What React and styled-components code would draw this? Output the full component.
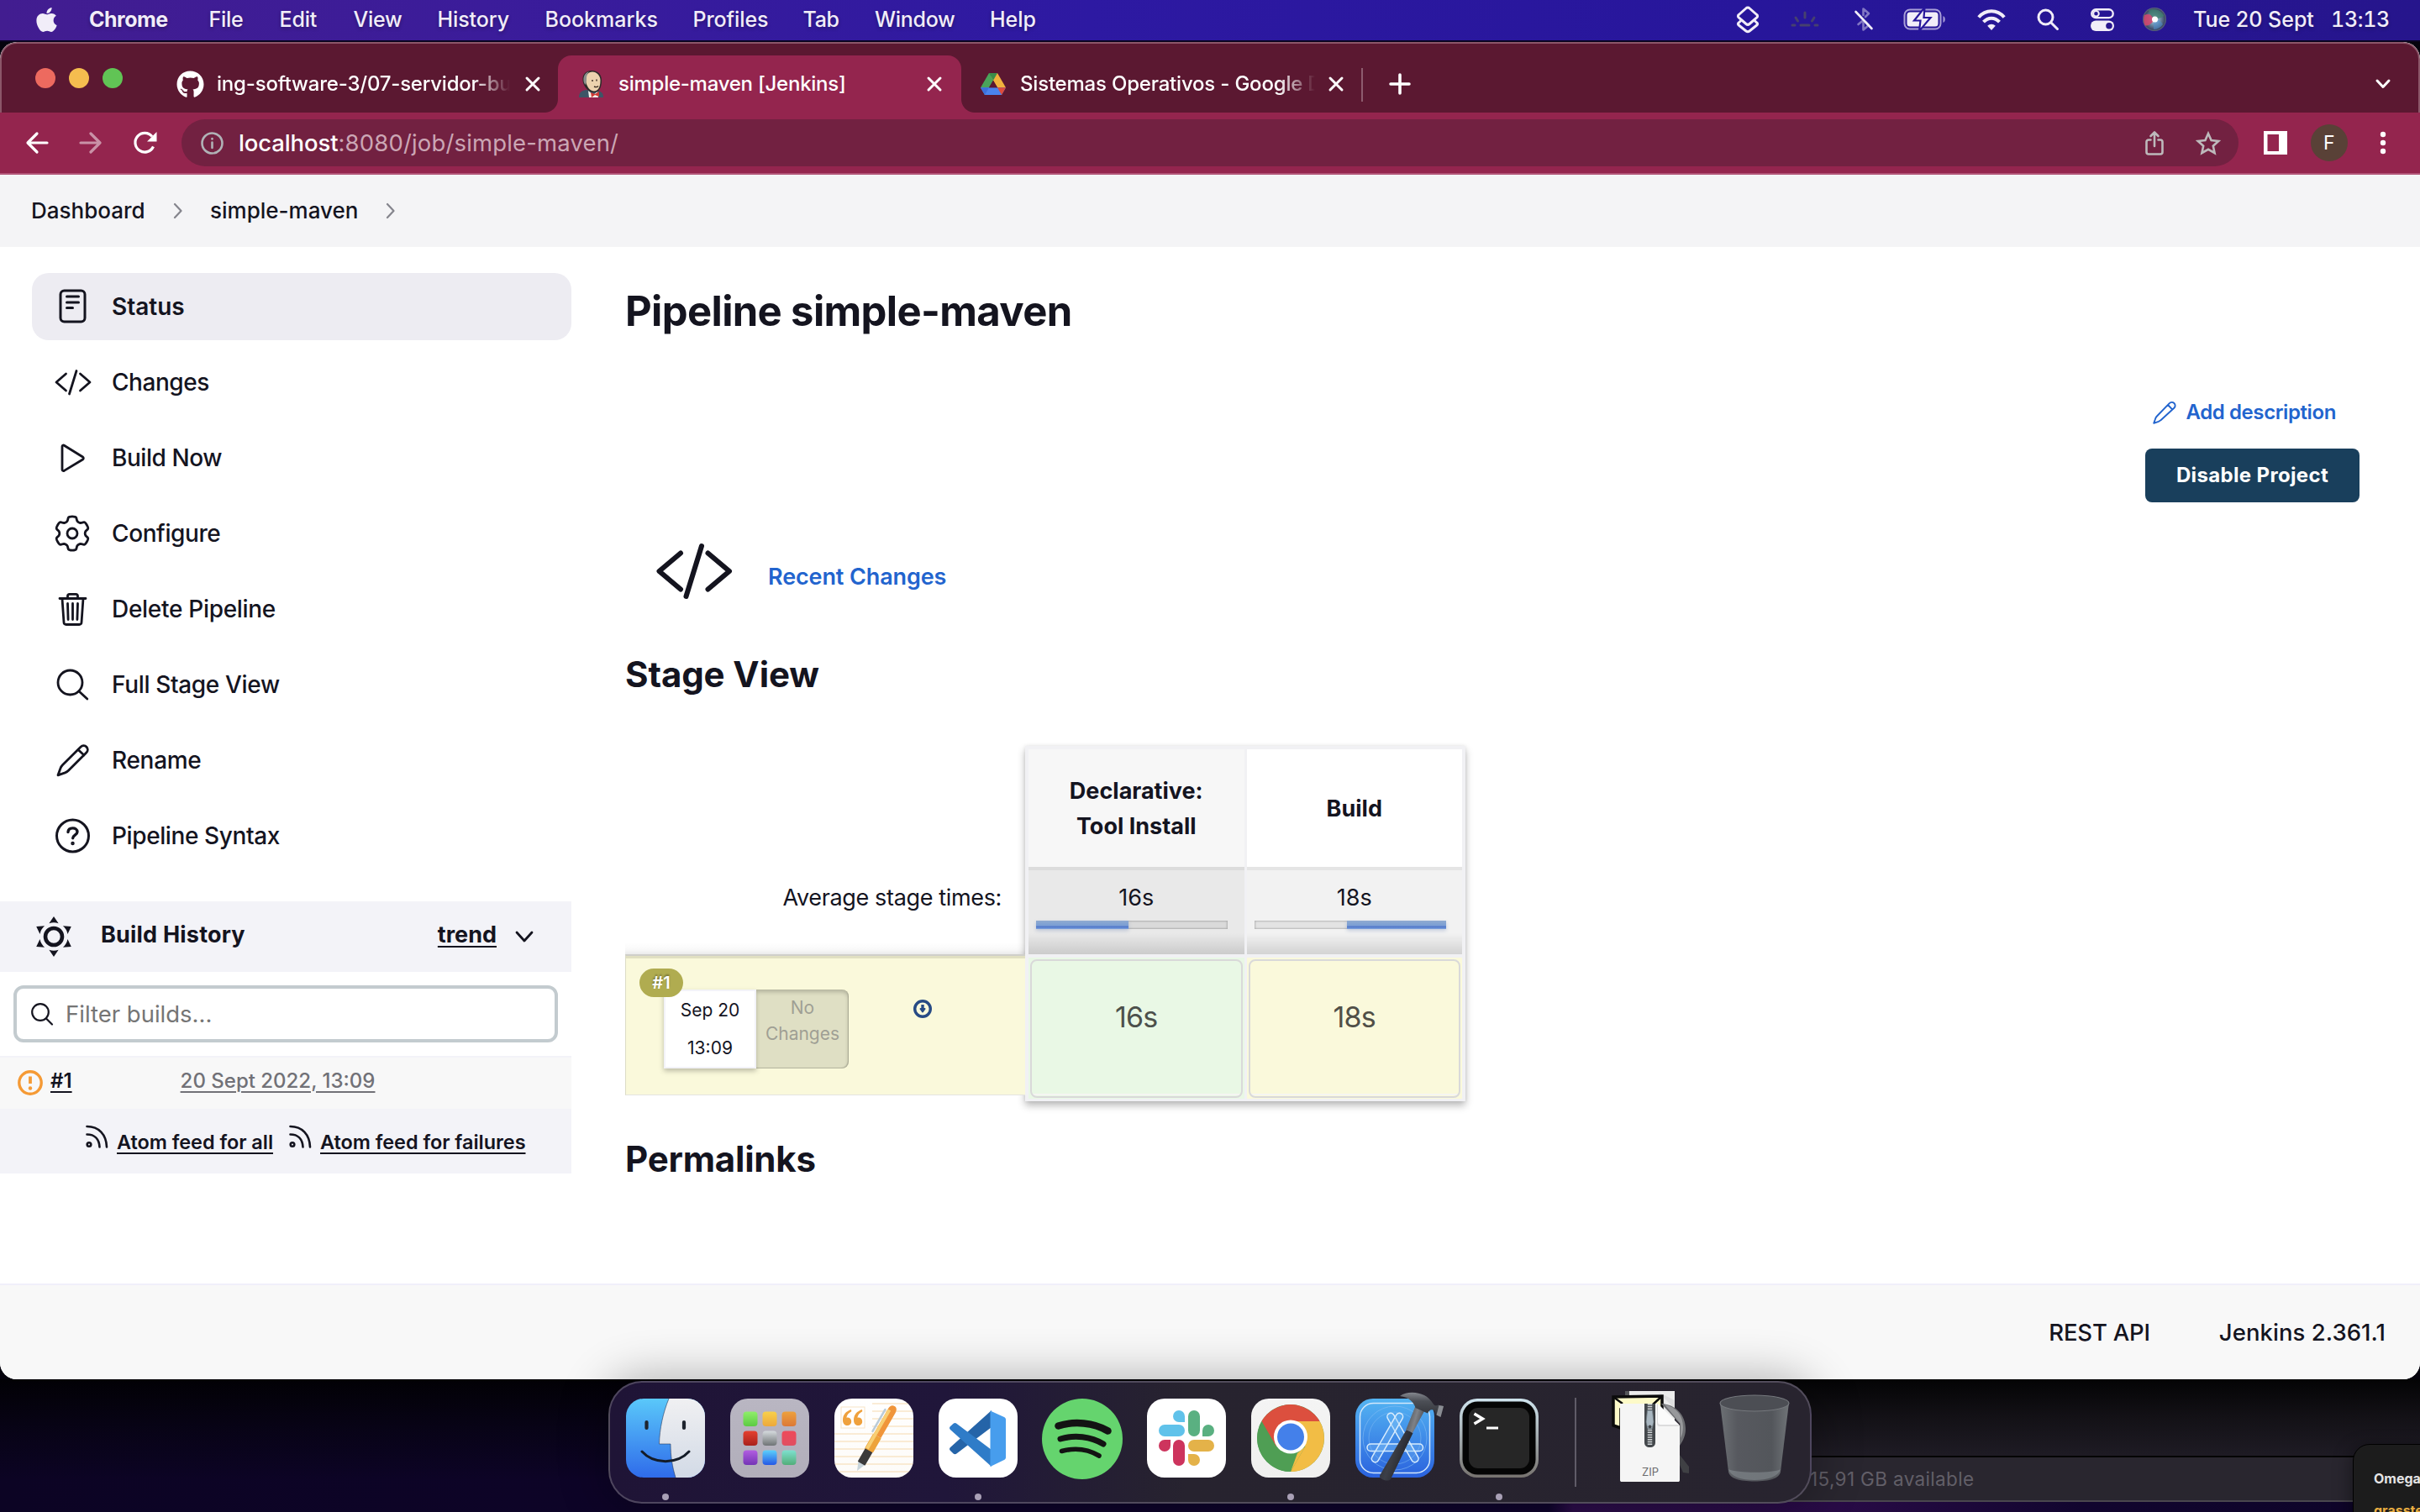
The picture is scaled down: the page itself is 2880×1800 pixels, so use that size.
import React from "react";
import styled, { createGlobalStyle } from "styled-components";
import { FaApple, FaGithub } from "react-icons/fa";

const ink = "#14141f";
const lilac = "#f3f3f8";
const wine = "#94254e";
const wineDark = "#5b1831";
const link = "#2264ce";

const Global = createGlobalStyle`
  *, *::before, *::after { box-sizing: border-box; }
  html, body { margin: 0; padding: 0; background: #05030d; }
  body { font-family: Inter, "Liberation Sans", sans-serif; color: ${ink}; overflow: hidden; }
  svg { display: block; flex: none; overflow: visible; }
`;

const Label = styled.span`
  flex: none;
  white-space: nowrap;
  font-size: ${(p) => p.$size}px;
  font-weight: ${(p) => p.$weight || 400};
  letter-spacing: ${(p) => p.$track || 0}px;
  color: ${(p) => p.$color || "inherit"};
  line-height: ${(p) => p.$line || 1.2};
  ${(p) => p.$tabular && "font-variant-numeric: tabular-nums;"}
`;

const Desktop = styled.div`
  width: 2880px;
  height: 1800px;
  display: flex;
  flex-direction: column;
  overflow: hidden;
  background: #05030d;
`;

/* ---------- menu bar ---------- */

const MenuBar = styled.header`
  flex: none;
  height: 50px;
  padding: 0 37px 2px 39px;
  display: flex;
  align-items: center;
  color: #f1edf8;
  background: linear-gradient(90deg, #421d90 0%, #3b1c9a 20%, #2d19a2 45%, #27169b 72%, #26158c 100%);
  border-bottom: 2px solid #0a0420;
  text-shadow: 0 2px 4px rgba(0, 0, 0, 0.3);
`;

const MenuItem = styled.div`
  flex: none;
  width: ${(p) => p.$width}px;
`;

const StatusIcons = styled.div`
  margin-left: auto;
  display: flex;
  align-items: center;
`;

const StatusSlot = styled.div`
  flex: none;
  margin-right: ${(p) => p.$gap}px;
`;

/* ---------- browser window ---------- */

const Window = styled.main`
  flex: none;
  height: 1592px;
  display: flex;
  flex-direction: column;
  border-radius: 20px;
  overflow: hidden;
  background: #ffffff;
`;

const TabStrip = styled.div`
  flex: none;
  height: 84px;
  display: flex;
  align-items: flex-end;
  background: ${wineDark};
  border: 2px solid #8b5669;
  border-bottom: 0;
  border-radius: 20px 20px 0 0;
  color: #fff;
`;

const Lights = styled.div`
  flex: none;
  width: 188px;
  height: 82px;
  padding: 29px 0 0 40px;
  display: flex;
  gap: 16px;
`;

const Light = styled.span`
  width: 24px;
  height: 24px;
  border-radius: 50%;
  background: ${(p) => p.$color};
`;

const Tab = styled.div`
  position: relative;
  flex: none;
  width: ${(p) => p.$width}px;
  height: 68px;
  padding-left: ${(p) => p.$left}px;
  padding-right: ${(p) => p.$right}px;
  display: flex;
  align-items: center;
  background: ${(p) => (p.$active ? wine : "transparent")};
  border-radius: 16px 16px 0 0;
  ${(p) =>
    p.$active &&
    `
    &::before, &::after {
      content: "";
      position: absolute;
      bottom: 0;
      width: 16px;
      height: 16px;
    }
    &::before { left: -16px; background: radial-gradient(circle at 0 0, transparent 15.5px, ${wine} 16.5px); }
    &::after { right: -16px; background: radial-gradient(circle at 100% 0, transparent 15.5px, ${wine} 16.5px); }
  `}
`;

const TabTitle = styled.div`
  flex: 1;
  min-width: 0;
  margin: 0 ${(p) => p.$gap || 14}px 0 ${(p) => p.$start}px;
  ${(p) => p.$fade && "mask-image: linear-gradient(90deg, #000 calc(100% - 48px), transparent calc(100% - 4px));"}
`;

const TabDivider = styled.i`
  flex: none;
  width: 2px;
  height: 40px;
  margin: 0 31px 13px 0;
  background: #8d5c6e;
`;

const StripEnd = styled.div`
  height: 68px;
  display: flex;
  align-items: center;
  ${(p) => p.$push && "margin-left: auto; padding-right: 33px;"}
`;

const Toolbar = styled.div`
  flex: none;
  height: 74px;
  padding: 0 40px 0 12px;
  display: flex;
  align-items: center;
  background: ${wine};
  border-bottom: 2px solid #b25578;
  color: #fff;
`;

const NavButton = styled.div`
  width: 64.3px;
  display: flex;
  justify-content: center;
  opacity: ${(p) => (p.$dim ? 0.5 : 1)};
`;

const Address = styled.div`
  flex: none;
  width: 2448px;
  height: 56px;
  margin-left: 11px;
  padding: 0 21px 0 23px;
  display: flex;
  align-items: center;
  border-radius: 28px;
  background: #722141;
`;

const AddressText = styled.div`
  flex: 1;
  margin-left: 18px;
`;

const AddressIcons = styled.div`
  display: flex;
  align-items: center;
  gap: 38px;
`;

const ToolbarEnd = styled.div`
  margin-left: 30px;
  display: flex;
  align-items: center;
`;

const Avatar = styled.div`
  width: 44px;
  height: 44px;
  margin: 0 38px 0 28px;
  padding-top: 2px;
  border-radius: 50%;
  background: #594137;
  display: flex;
  align-items: center;
  justify-content: center;
`;

/* ---------- Jenkins page ---------- */

const Breadcrumbs = styled.nav`
  flex: none;
  height: 86px;
  padding-left: 37px;
  display: flex;
  align-items: center;
  background: #f4f4f6;
`;

const Crumb = styled.div`
  width: ${(p) => p.$width}px;
`;

const Page = styled.div`
  flex: none;
  height: 1234px;
  display: flex;
`;

const Sidebar = styled.aside`
  flex: none;
  width: 680px;
  padding-top: 31px;
`;

const Tasks = styled.div`
  display: flex;
  flex-direction: column;
  gap: 10px;
  padding-left: 38px;
`;

const Task = styled.div`
  height: 80px;
  padding-left: 23px;
  display: flex;
  align-items: center;
  gap: 24px;
  border-radius: 20px;
  background: ${(p) => (p.$active ? "#edecf2" : "transparent")};
`;

const TaskName = styled.div`
  padding-top: 2px;
`;

const HistoryHead = styled.div`
  height: 84px;
  margin-top: 38px;
  padding: 0 45px 0 40px;
  display: flex;
  align-items: center;
  background: ${lilac};
`;

const Grow = styled.span`
  flex: 1;
`;

const Raised = styled.span`
  display: flex;
  margin-bottom: ${(p) => p.$by}px;
  margin-left: ${(p) => p.$left || 0}px;
`;

const Underlined = styled(Label)`
  text-decoration: underline;
  text-decoration-thickness: 2px;
  text-underline-offset: 4px;
`;

const Filter = styled.div`
  height: 68px;
  margin: 16px;
  padding-left: 17px;
  display: flex;
  align-items: center;
  gap: 15px;
  border: 4px solid #c3cbcf;
  border-radius: 12px;
`;

const BuildRow = styled.div`
  height: 63px;
  padding-left: 21px;
  display: flex;
  align-items: center;
  background: #f8f8f8;
  border-top: 2px solid ${lilac};
`;

const Feeds = styled.div`
  height: 77px;
  padding-left: 102px;
  display: flex;
  align-items: center;
  background: ${lilac};
`;

const FeedLink = styled.div`
  margin-left: 10px;
  padding-top: 3px;
`;

const Content = styled.section`
  flex: 1;
  padding: 46px 72px 0 64px;
  display: flex;
  flex-direction: column;
`;

const Heading = styled.h1`
  margin: ${(p) => p.$top || 0}px 0 0;
  font-size: ${(p) => p.$size}px;
  line-height: ${(p) => p.$line}px;
  letter-spacing: ${(p) => p.$track}px;
  font-weight: 700;
`;

const Actions = styled.div`
  margin-top: 70px;
  display: flex;
  flex-direction: column;
  align-items: flex-end;
  gap: 23px;
`;

const AddLink = styled.div`
  height: 40px;
  padding-right: 28px;
  display: flex;
  align-items: center;
  gap: 11px;
  color: ${link};
`;

const Button = styled.div`
  width: 255px;
  height: 64px;
  padding-top: 1px;
  border-radius: 8px;
  display: flex;
  align-items: center;
  justify-content: center;
  background: #193f5c;
  color: #fff;
`;

const Recent = styled.div`
  height: 66px;
  margin-top: 49px;
  padding-left: 37px;
  display: flex;
  align-items: center;
  gap: 43px;
  color: ${link};
`;

const RecentText = styled.div`
  padding-top: 15px;
`;

const StageTable = styled.div`
  margin-top: 60px;
  height: 423px;
  display: flex;
`;

const RunColumn = styled.div`
  width: 476px;
  padding-top: 148px;
`;

const AverageLabel = styled.div`
  height: 100px;
  padding: 17px 28px 0 0;
  text-align: right;
  background: linear-gradient(180deg, rgba(0,0,0,0) 86%, rgba(0,0,0,0.025) 94%, rgba(0,0,0,0.08) 100%);
`;

const Run = styled.div`
  position: relative;
  height: 168px;
  padding: 40px 0 0 45px;
  display: flex;
  align-items: flex-start;
  background: #faf9db;
  border-top: 2px solid #cfcfca;
  border-left: 1px solid #dcdcc6;
  border-bottom: 1px solid #e4e4e0;
  box-shadow: inset 0 3px 0 #e1e0c2;
`;

const RunBadge = styled.div`
  position: absolute;
  left: 16px;
  top: 15px;
  width: 52px;
  height: 34px;
  border-radius: 17px;
  display: flex;
  align-items: center;
  justify-content: center;
  background: #b0ac50;
  color: #fff;
  text-shadow: 0 -2px 2px rgba(0, 0, 0, 0.3);
`;

const RunDate = styled.div`
  width: 110px;
  height: 94px;
  padding-top: 7px;
  display: flex;
  flex-direction: column;
  align-items: center;
  gap: 14px;
  background: #fff;
  border: 2px solid ${lilac};
  box-shadow: 0 3px 6px rgba(0, 0, 0, 0.25);
`;

const RunChanges = styled.div`
  width: 110px;
  height: 94px;
  padding-top: 6px;
  text-align: center;
  border-radius: 0 8px 8px 0;
  background: #dfdfc4;
  box-shadow: inset 0 3px 5px rgba(0, 0, 0, 0.2), inset -1px -1px 1px rgba(0, 0, 0, 0.18);
`;

const RunDownload = styled.div`
  margin: 12px 0 0 77px;
`;

const Stages = styled.div`
  width: 524px;
  height: 423px;
  padding: 4px 4px 3px;
  display: flex;
  gap: 3px;
  background: #f1f1f4;
  box-shadow: 0 5px 9px rgba(0, 0, 0, 0.28), 0 0 4px rgba(0, 0, 0, 0.08);
`;

const Stage = styled.div`
  flex: 1;
  display: flex;
  flex-direction: column;
`;

const StageName = styled.div`
  height: 140px;
  padding-top: 2px;
  display: flex;
  align-items: center;
  justify-content: center;
  text-align: center;
  background: ${(p) => p.$bg};
`;

const StageAverage = styled.div`
  height: 104px;
  padding-top: 21px;
  display: flex;
  flex-direction: column;
  align-items: center;
  gap: 15px;
  border-top: 4px solid ${(p) => p.$edge};
  background: linear-gradient(180deg, rgba(0,0,0,0) 75%, rgba(0,0,0,0.13) 100%), ${(p) => p.$bg};
`;

const Meter = styled.div`
  width: 228px;
  height: 10px;
  margin-right: 10px;
  display: flex;
  justify-content: ${(p) => (p.$end ? "flex-end" : "flex-start")};
  background: ${(p) => p.$bg};
  box-shadow: inset 0 0 2px 1px rgba(0, 0, 0, 0.2);
`;

const MeterFill = styled.i`
  width: ${(p) => p.$width}px;
  height: 10px;
  background: linear-gradient(180deg, #8faad0 0%, #7c9fd4 55%, #5279cb 75%, #80a5de 100%);
  box-shadow: 0 2px 4px rgba(60, 90, 160, 0.25);
`;

const StageResult = styled.div`
  height: 168px;
  margin-top: 4px;
  padding: 2px;
  background: ${(p) => p.$bg};
`;

const StageBox = styled.div`
  height: 165px;
  padding-top: 46px;
  text-align: center;
  border: 2px solid #d9d9d9;
  border-radius: 8px;
  background: linear-gradient(180deg, transparent 158px, #f5f5f2 158px, #f5f5f2 160px, transparent 160px);
`;

const Footer = styled.footer`
  flex: none;
  height: 114px;
  padding: 40px 41px 0 0;
  display: flex;
  align-items: flex-start;
  justify-content: flex-end;
  gap: 82px;
  background: #f8f8f8;
  border-top: 2px solid #f0effa;
`;

/* ---------- bottom of the desktop ---------- */

const Shelf = styled.div`
  position: relative;
  flex: 1;
  display: flex;
  justify-content: center;
  background:
    linear-gradient(180deg, #020105 0, rgba(5, 3, 13, 0.6) 60px, rgba(5, 3, 13, 0) 120px),
    linear-gradient(90deg, #0c0424 0, #0f042c 64%, #2c0d4a 65%, #280b46 76%, #11052e 86%, #0d0428 100%);
`;

const BackWindow = styled.div`
  position: absolute;
  left: 1900px;
  right: 0;
  top: 0;
  height: 146px;
  background: linear-gradient(180deg, #040405 0, #131116 45px, #1e1b24 90px);
  border-bottom: 2px solid #4a474e;
  display: flex;
  align-items: flex-end;
`;

const BackStatus = styled.div`
  width: 100%;
  height: 53px;
  padding: 0 0 1px 254px;
  display: flex;
  align-items: center;
  border-top: 2px solid #050505;
  background: #29262f;
  color: #625f68;
`;

const Notice = styled.div`
  position: absolute;
  left: 2800px;
  right: -20px;
  top: 77px;
  height: 120px;
  padding: 31px 0 0 24px;
  display: flex;
  flex-direction: column;
  gap: 19px;
  background: #1c1c1c;
  border: 1px solid #000;
  border-radius: 20px;
  box-shadow: -4px 4px 20px rgba(0, 0, 0, 0.35);
`;

const Dock = styled.div`
  position: relative;
  width: 1432px;
  height: 146px;
  margin-top: 2px;
  padding-left: 19px;
  display: flex;
  border: 2px solid rgba(110, 104, 122, 0.6);
  border-radius: 40px;
  background: linear-gradient(90deg, #1f1436 0%, #20163a 28%, #27232f 48%, #28242f 100%);
  box-shadow: 0 0 55px 4px rgba(0, 0, 0, 0.3);
`;

const DockItem = styled.div`
  flex: none;
  width: 94px;
  height: 142px;
  margin-right: ${(p) => (p.$last ? 0 : 30)}px;
  padding-top: 19px;
  display: flex;
  flex-direction: column;
  align-items: center;
  gap: 19px;
`;

const RunningDot = styled.i`
  width: 8px;
  height: 8px;
  border-radius: 50%;
  background: #a9a0b6;
`;

const DockDivider = styled.i`
  flex: none;
  width: 2px;
  height: 106px;
  margin: 18px 41px 0 13px;
  background: #5f5b67;
`;

/* ---------- line icons ---------- */

const Stroke = ({ w = 44, h = 44, sw = 3, color = ink, children, ...rest }) => (
  <svg
    width={w}
    height={h}
    viewBox={`0 0 ${w} ${h}`}
    fill="none"
    stroke={color}
    strokeWidth={sw}
    strokeLinecap="round"
    strokeLinejoin="round"
    {...rest}
  >
    {children}
  </svg>
);

const gearPath = (() => {
  const pts = [];
  for (let i = 0; i < 6; i += 1) {
    const base = -90 + i * 60;
    [
      [-16, 18.6],
      [-11, 20.4],
      [11, 20.4],
      [16, 18.6],
      [20, 16],
      [30, 15],
      [40, 16],
    ].forEach(([a, r]) => {
      const t = ((base + a) * Math.PI) / 180;
      pts.push([24 + r * Math.cos(t), 24 + r * Math.sin(t)]);
    });
  }
  const mid = (a, b) => `${((a[0] + b[0]) / 2).toFixed(2)} ${((a[1] + b[1]) / 2).toFixed(2)}`;
  let d = `M${mid(pts[pts.length - 1], pts[0])}`;
  pts.forEach((p, i) => {
    d += `Q${p[0].toFixed(2)} ${p[1].toFixed(2)} ${mid(p, pts[(i + 1) % pts.length])}`;
  });
  return `${d}Z`;
})();

const taskIcons = {
  status: (
    <Stroke w={48} h={48}>
      <rect x="11" y="5" width="29" height="37" rx="4.5" />
      <path d="M18.500 12h14M18.500 19h14M18.500 25.500h7" />
    </Stroke>
  ),
  code: (
    <Stroke w={48} h={48} sw={2.8}>
      <path d="M17.500 14L6 24l11.500 10M34.500 14L46 24 34.500 34M30 10.500l-8.500 27.500" />
    </Stroke>
  ),
  play: (
    <Stroke w={48} h={48} sw={2.8}>
      <path d="M13 10.500v27.500c0 1.300 1.200 2 2.300 1.400L37.500 26c1.100-.7 1.100-2.300 0-3L15.300 9.200C14.200 8.500 13 9.200 13 10.500z" />
    </Stroke>
  ),
  gear: (
    <Stroke w={48} h={48} sw={2.8}>
      <g transform="translate(1 0)">
        <path d={gearPath} />
        <circle cx="24" cy="24" r="6" />
      </g>
    </Stroke>
  ),
  trash: (
    <Stroke w={48} h={48} sw={2.8}>
      <path d="M10 11.500h31M13 11.500l2 28.500c.1 1.500 1.200 2.500 2.700 2.500h15.600c1.500 0 2.600-1 2.700-2.500l2-28.500M19.500 11.500V8.500c0-1.400 1-2.200 2.300-2.200h7.400c1.300 0 2.300.8 2.300 2.200v3M25.500 17.500v19M19.500 17.500l.6 19M31.500 17.500l-.6 19" />
    </Stroke>
  ),
  search: (
    <Stroke w={48} h={48} sw={2.8}>
      <circle cx="22.500" cy="21.500" r="14.500" />
      <path d="M33 32l9.800 9" />
    </Stroke>
  ),
  pencil: (
    <Stroke w={48} h={48} sw={2.8}>
      <path d="M35 8.200c2-2 5.200-2 7 0s1.800 4.800-.2 6.700L20.500 36.300c-1.200 1.200-2.500 2-4 2.600L8 41.800l3-8.300c.5-1.500 1.400-2.900 2.600-4.100zM32 11.500l7 6.500" />
    </Stroke>
  ),
  help: (
    <Stroke w={48} h={48}>
      <circle cx="25.500" cy="24" r="19" />
      <path d="M20 19.500c.2-3 2.600-4.600 5.500-4.600s5.500 1.600 5.500 4.400c0 3.700-5.300 4-5.300 7.400" strokeWidth="3.400" />
      <circle cx="25.500" cy="33" r="1" strokeWidth="2.500" />
    </Stroke>
  ),
};

const HistoryIcon = () => (
  <svg width="48" height="50" viewBox="-24 -25 48 50">
    <circle r="10" fill="none" stroke={ink} strokeWidth="4.6" />
    {[0, 60, 120, 180, 240, 300].map((a) => (
      <path key={a} d="M0-24L5.600-15.800Q0-17.800-5.600-15.800Z" fill={ink} transform={`rotate(${a})`} />
    ))}
  </svg>
);

const FeedIcon = () => (
  <Stroke w={27} h={28} sw={2.6}>
    <circle cx="4" cy="23.500" r="2.300" />
    <path d="M1.500 11.500c9 0 14.500 5.500 15 15M1.500 2c14 0 23 9.500 23.500 24.500" />
  </Stroke>
);

const Cross = () => (
  <Stroke w={18} h={18} sw={3} color="#fff">
    <path d="M2 2l14 14M16 2L2 16" />
  </Stroke>
);

const CrumbArrow = () => (
  <Stroke w={12} h={20} sw={2.2} color="#85858d">
    <path d="M2 2l7.500 8L2 18" />
  </Stroke>
);

/* ---------- menu bar icons ---------- */

const statusItems = [
  [
    37,
    <Stroke key="s" w={28} h={32} sw={3} color="#f1edf8">
      <path d="M14 2c1 0 1.500.3 2.200 1l8.500 7.500c1.200 1 1.200 2.300 0 3.400L16 21.500c-1.300 1.100-2.700 1.100-4 0l-8.700-7.600c-1.200-1.100-1.200-2.400 0-3.400L11.800 3c.7-.7 1.200-1 2.200-1z" />
      <path d="M6.500 17l-3.200 3c-1.200 1-1.200 2 0 3l8.700 7c1.300 1 2.700 1 4 0l8.700-7c1.200-1 1.200-2 0-3l-3.200-3" />
    </Stroke>,
  ],
  [
    42,
    <Stroke key="k" w={34} h={20} sw={3} color="#46406f">
      <path d="M2 17h3M12 17h10M29 17h3M17 2v6M6 8l2.500 4M28 8l-2.500 4" />
    </Stroke>,
  ],
  [
    36,
    <Stroke key="b" w={22} h={28} sw={2.6} color="#f1edf8">
      <path d="M4.500 20l6-5M10.500 9V1.500l6.500 5.500-4 4M10.500 16v10.500l6.500-5.500-3.500-3.500" opacity=".45" />
      <path d="M1.500 5l19 20" />
    </Stroke>,
  ],
  [
    36,
    <svg key="p" width="52" height="26" viewBox="0 0 52 26">
      <rect x="1.500" y="1.500" width="43" height="23" rx="6.500" fill="none" stroke="#a99fd8" strokeWidth="2" />
      <rect x="4.500" y="4.500" width="37" height="17" rx="3.500" fill="#f1edf8" />
      <path d="M47.500 9c3 1.200 3 6.800 0 8z" fill="#a99fd8" />
      <path d="M25.500-1L13 14.500h7.500L19 27l13.500-16h-8z" fill="#f1edf8" stroke="#27169b" strokeWidth="2.200" />
    </svg>,
  ],
  [
    37,
    <svg key="w" width="34" height="25" viewBox="0 0 34 25" fill="none" stroke="#f1edf8" strokeWidth="4">
      <path d="M1.800 9.500C10-.2 24-.2 32.200 9.500" />
      <path d="M7.500 15.200c5.500-6 13.500-6 19 0" />
      <path d="M17 25l-4.800-5.200c2.600-2.800 7-2.800 9.600 0z" fill="#f1edf8" stroke="none" />
    </svg>,
  ],
  [
    38,
    <Stroke key="q" w={26} h={26} sw={3} color="#f1edf8">
      <circle cx="10.500" cy="10.500" r="8.500" />
      <path d="M17 17l7.500 7.500" />
    </Stroke>,
  ],
  [
    34,
    <svg key="c" width="28" height="27" viewBox="0 0 28 27">
      <rect x="1.300" y="1.300" width="25.400" height="9.800" rx="4.900" fill="none" stroke="#f1edf8" strokeWidth="2.400" />
      <circle cx="6.500" cy="6.200" r="3.300" fill="none" stroke="#f1edf8" strokeWidth="2" />
      <rect x="0" y="14.500" width="28" height="12.500" rx="6.200" fill="#f1edf8" />
      <circle cx="22" cy="20.700" r="3.800" fill="#27158e" />
    </svg>,
  ],
  [
    32,
    <svg key="i" width="28" height="28" viewBox="0 0 28 28">
      <defs>
        <radialGradient id="siri" cx="50%" cy="50%" r="55%">
          <stop offset="0" stopColor="#ffffff" />
          <stop offset=".35" stopColor="#7f9fb8" />
          <stop offset=".8" stopColor="#3c4a66" />
          <stop offset="1" stopColor="#7f8694" />
        </radialGradient>
      </defs>
      <circle cx="14" cy="14" r="14" fill="url(#siri)" />
      <path d="M2 9C8 6 13 10 14 14c-3 5-8 9-11.500 7C.8 17 .8 12 2 9z" fill="#d0476f" opacity=".9" />
      <path d="M7 3c8-3 16 1 18.500 7-4 3-8 3-12 4-2-3-6-6-6.500-11z" fill="#3f7f6c" opacity=".75" />
      <path d="M14 14c4 0 8 2 10 6-3 4-7 6-11 6 0-4-1-8 1-12z" fill="#4f8fd0" opacity=".55" />
      <circle cx="14.500" cy="14" r="3.500" fill="#fff" />
    </svg>,
  ],
];

/* ---------- favicons ---------- */

const Butler = () => (
  <svg width="30" height="32" viewBox="0 0 30 32">
    <path d="M0 32c0-6 3-8 8-9l14 1c5 1 7 3 7 8z" fill="#3d5566" />
    <path d="M11 24l6 5 5-4 1 7H12z" fill="#f5f2ea" />
    <path d="M4.500 12C3.500 4 9 0 15 0c8 0 12 5 12 12 0 8-3 14-9 14S5.500 20 4.500 12z" fill="#2d2a29" />
    <path d="M8 12C8 5 11 1.500 16 1.500S25.500 6 25.500 12c0 7-2.500 12.500-7.500 12.500S9 19 8 12z" fill="#ecd2ae" />
    <path d="M5.500 12C5 6 8 2 12 1.500 9 4 9 8 9 12l-1 5c-1.500-1-2.300-3-2.500-5z" fill="#8a8f8d" />
    <path d="M16 11v2M21 10.500v2M18 19c2 1 4 .5 5-.5" stroke="#3a2c22" strokeWidth="1.4" fill="none" />
    <path d="M14 26l5 2 5-3v6l-5-2-4 3z" fill="#cf3a34" />
  </svg>
);

const Drive = () => (
  <svg width="30" height="26" viewBox="0 0 30 26">
    <path d="M10 0h10L10 17.300 5 26 0 17.300z" fill="#4aa35a" />
    <path d="M20 0l10 17.300H20L12.500 4.400 15 0z" fill="#f1b23d" />
    <path d="M10 0l5 8.700L20 0z" fill="#3a8c49" />
    <path d="M0 17.300h30L25 26H5z" fill="#4a83ee" />
    <path d="M20 17.300h10L25 26z" fill="#dd4b3c" />
    <path d="M10 17.300L5 26 0 17.300z" fill="#3c6fdc" />
    <path d="M10 17.300l5-8.600 5 8.600z" fill={wineDark} />
  </svg>
);

/* ---------- dock icons ---------- */

const Tile = ({ children, fill = "#fff", id }) => (
  <svg width="94" height="94" viewBox="0 0 94 94">
    <defs>
      <clipPath id={id}>
        <rect width="94" height="94" rx="21" />
      </clipPath>
      <linearGradient id={`${id}-fill`} x1="0" x2="0" y1="0" y2="1">
        <stop offset="0" stopColor={Array.isArray(fill) ? fill[0] : fill} />
        <stop offset="1" stopColor={Array.isArray(fill) ? fill[1] : fill} />
      </linearGradient>
    </defs>
    <rect width="94" height="94" rx="21" fill={`url(#${id}-fill)`} />
    {children}
  </svg>
);

const Finder = () => (
  <Tile id="finder" fill={["#5ac8fa", "#2f6bea"]}>
    <defs>
      <linearGradient id="face" x1="0" x2="0" y1="0" y2="1">
        <stop offset="0" stopColor="#f0f0f2" />
        <stop offset="1" stopColor="#d2dae6" />
      </linearGradient>
    </defs>
    <path clipPath="url(#finder)" d="M51 0C44 17 40 36 39.500 54h13.500c0 14 2 27 6 40h35V0z" fill="url(#face)" />
    <path d="M51 0C44 17 40 36 39.500 54h13.500c0 14 2 27 6 40" fill="none" stroke="#2b3c5a" strokeWidth="1" opacity=".6" />
    <path d="M24.500 28v7M69 28v7" stroke="#1e242e" strokeWidth="4.2" strokeLinecap="round" />
    <path d="M19 63c14 15.500 42 15.500 56 0" fill="none" stroke="#141c28" strokeWidth="3" strokeLinecap="round" />
  </Tile>
);

const padColors = [
  ["#8fee6a", "#5ccb43"],
  ["#f8d04b", "#eda83b"],
  ["#eda13d", "#dc7835"],
  ["#e5402f", "#a9211b"],
  ["#d5dadd", "#6f7476"],
  ["#ee4a5a", "#e04f61"],
  ["#b25ee0", "#7434b6"],
  ["#5cd0fb", "#2558e6"],
  ["#7fe0cf", "#52ae79"],
];

const Launchpad = () => (
  <Tile id="pad" fill={["#b9b6c2", "#b1aeba"]}>
    {padColors.map(([a, b], i) => (
      <g key={a}>
        <linearGradient id={`pad${i}`} x1="0" x2="0" y1="0" y2="1">
          <stop offset="0" stopColor={a} />
          <stop offset="1" stopColor={b} />
        </linearGradient>
        <rect
          x={15.5 + (i % 3) * 23}
          y={15.5 + Math.floor(i / 3) * 23}
          width="17"
          height="17.5"
          rx="4"
          fill={`url(#pad${i})`}
        />
      </g>
    ))}
  </Tile>
);

const Pages = () => (
  <Tile id="pages" fill={["#ffffff", "#fdfbf8"]}>
    <g clipPath="url(#pages)" stroke="#f6d9ae" strokeWidth="1.2">
      <path d="M45 6h49M45 15h49M45 24h49M45 33h49M0 42h94M0 51h94M0 60h94M0 69h94M0 78h94M0 87h94" />
    </g>
    <rect x="8" y="10" width="28" height="25" fill="#fff" stroke="#f8e3c6" strokeWidth="1" />
    <g fill="#efa13d">
      <path d="M20 13c-6 2-10 6-10 12.500 0 4 2 6.500 5.200 6.500 2.900 0 5-2 5-4.800s-2-4.600-4.600-4.600c-.6 0-1 0-1.300.2.600-3.400 2.800-6 6-7.600z" />
      <path d="M33 13c-6 2-10 6-10 12.500 0 4 2 6.500 5.200 6.500 2.900 0 5-2 5-4.800s-2-4.600-4.600-4.600c-.6 0-1 0-1.300.2.600-3.400 2.800-6 6-7.600z" />
    </g>
    <g transform="translate(27 86) rotate(-60)">
      <path d="M0 0l11-4.500v9z" fill="#c8d4da" />
      <rect x="10" y="-5" width="19" height="10" rx="1" fill="#3b3a3a" />
      <rect x="28" y="-5.600" width="20" height="11.200" rx="1" fill="#eda33a" />
      <path d="M48-5h34c5 0 7 2 7 5s-2 5-7 5H48z" fill="#f0953a" />
      <path d="M29-5h53v4H29z" fill="#f8cf74" />
      <path d="M50-7.500h30" stroke="#b9cbd8" strokeWidth="2.5" strokeLinecap="round" />
    </g>
  </Tile>
);

const VsCode = () => (
  <Tile id="code">
    <path d="M63 14L14 58c-1.300 1.200-1.300 2.800 0 4l3.600 3.400c1.200 1 2.600 1 3.800.1L63 34z" fill="#2564a8" />
    <path d="M63 81L14 37c-1.300-1.200-1.300-2.800 0-4l3.600-3.200c1.200-1 2.600-1 3.800-.1L63 61z" fill="#2f7cc8" />
    <path d="M61.500 14.500L78 22c1.200.6 2 1.600 2 3v45c0 1.400-.8 2.400-2 3l-16.500 8z" fill="#479ded" />
  </Tile>
);

const Spotify = () => (
  <svg width="96" height="96" viewBox="0 0 96 96">
    <circle cx="48" cy="48" r="48" fill="#65d46e" />
    <g fill="none" stroke="#131313" strokeLinecap="round">
      <path d="M19.500 32.500c19-6 42-4 59 6" strokeWidth="8.5" />
      <path d="M22 48c17-5 36-3 51 6" strokeWidth="7" />
      <path d="M23.500 62.500c15-4 31-2.500 44.500 5.500" strokeWidth="5.6" />
    </g>
  </svg>
);

const Slack = () => (
  <Tile id="slack">
    <g fill="#60c2ea">
      <rect x="14" y="31" width="31" height="14" rx="7" />
      <path d="M45 28h-7a7 7 0 1 1 7-7z" />
    </g>
    <g fill="#5ab081">
      <rect x="49" y="14" width="14" height="31" rx="7" />
      <path d="M66 45v-7a7 7 0 1 1 7 7z" />
    </g>
    <g fill="#cd345d">
      <rect x="31" y="49" width="14" height="31" rx="7" />
      <path d="M28 49v7a7 7 0 1 1-7-7z" />
    </g>
    <g fill="#e4b249">
      <rect x="49" y="49" width="31" height="14" rx="7" />
      <path d="M49 66h7a7 7 0 1 1-7 7z" />
    </g>
  </Tile>
);

const Chrome = () => (
  <Tile id="chrome" fill={["#f4f4f4", "#efefee"]}>
    <circle cx="47" cy="47" r="40" fill="#4f9e54" />
    <path d="M47 27h34.600A40 40 0 0 1 47 87l17.300-30z" fill="#f2bd45" />
    <path d="M12.400 27a40 40 0 0 1 69.200 0H47L29.700 57z" fill="#dc4f3e" />
    <path d="M12.400 27l17.300 30L47 67h8L47 87A40 40 0 0 1 12.400 27z" fill="#4f9e54" />
    <path d="M64.300 57L47 87l8-22z" fill="#f2bd45" />
    <circle cx="47" cy="45.500" r="20" fill="#fff" />
    <circle cx="47" cy="45.500" r="16" fill="#4480ea" />
  </Tile>
);

const Xcode = () => (
  <Tile id="xcode" fill={["#54b4f2", "#2a62de"]}>
    <defs>
      <linearGradient id="claw" x1="0" x2="0" y1="0" y2="1">
        <stop offset="0" stopColor="#85888f" />
        <stop offset=".35" stopColor="#4c4f56" />
        <stop offset="1" stopColor="#303238" />
      </linearGradient>
      <linearGradient id="shaft" x1="0" x2="1" y1="0" y2=".4">
        <stop offset="0" stopColor="#3b3e45" />
        <stop offset=".6" stopColor="#7f8288" />
        <stop offset="1" stopColor="#4a4d54" />
      </linearGradient>
      <linearGradient id="grip" x1="0" x2="1" y1="0" y2=".5">
        <stop offset="0" stopColor="#22242b" />
        <stop offset=".5" stopColor="#3c3f48" />
        <stop offset="1" stopColor="#1c1d23" />
      </linearGradient>
    </defs>
    <rect x="5.500" y="5.500" width="83" height="83" rx="16" fill="none" stroke="#d3e8fb" strokeWidth="1.5" />
    <circle cx="47" cy="47" r="38" fill="none" stroke="#84bdf4" strokeWidth="1" opacity=".6" />
    <circle cx="47" cy="47" r="31" fill="none" stroke="#84bdf4" strokeWidth="1" opacity=".5" />
    <g fill="rgba(130,195,250,.3)" stroke="#d8ecfd" strokeWidth="1.5">
      <rect x="14" y="54" width="66.500" height="8.500" rx="4.250" />
      <rect x="-4.200" y="-33" width="8.400" height="66" rx="4.200" transform="translate(56.500 46.500) rotate(-30)" />
      <rect x="-4.200" y="-33" width="8.400" height="66" rx="4.200" transform="translate(38 46.500) rotate(30)" />
    </g>
    <path d="M60.500 37.500c3 .4 5.500 1.600 8 3.500L42.500 95c-1.500 5-14.500 2-13.500-3.500z" fill="url(#grip)" />
    <path d="M71 10l11 5-14 26c-2.500-1.900-5-3.100-8-3.500z" fill="url(#shaft)" />
    <path
      d="M53-3c8-6 21-5 29-1 4 2 8 6 10.500 10 1.500 2.500 3.500 3 6 1.500L105 9l-3.500 13-6-3c-.5-3-1-4.500-3-5.500-3-1-5 1-6.500 4L71.500 11C70 5 64-2 53-3z"
      fill="url(#claw)"
    />
    <path d="M99.500 8l5.500 1-3.500 13-5-2.500z" fill="#8a8d93" />
  </Tile>
);

const Terminal = () => (
  <Tile id="term" fill={["#cfe4ee", "#77736f"]}>
    <rect x="3.500" y="3.500" width="87" height="87" rx="18" fill="#050505" />
    <rect x="11" y="11" width="72" height="72" rx="11" fill="#262626" />
    <path d="M17.500 18l10 6-10 6" fill="none" stroke="#fff" strokeWidth="3.4" />
    <path d="M32 35h14" stroke="#fff" strokeWidth="3" />
  </Tile>
);

const Archive = () => (
  <svg width="94" height="94" viewBox="0 0 94 94">
    <path d="M17-9h59v70H17z" fill="#ececec" />
    <path d="M56-8l20 20V2z" fill="#dededf" />
    <path d="M17-9h5v10h-5z" fill="#55565a" />
    <path d="M3-2l58-1v16H12v22L3 32z" fill="#fdfac8" stroke="#0b0b0b" strokeWidth="3.5" />
    <path d="M3-2l11 8M61-3l-11 10" stroke="#0b0b0b" strokeWidth="2.5" />
    <path d="M60 6c18 1 29 14 29 30 0 8-3 14-7 20V30z" fill="#6d6e72" />
    <path d="M64 7c14 3 22 13 22 27 0 5-1 9-3 13V30z" fill="#97989b" />
    <path d="M82 67l11 14v8l-7-1-4-9z" fill="#3f4044" />
    <path d="M11 6h44l27 26v65c0 1.500-.8 2-2 2H13c-1.200 0-2-.5-2-2z" fill="#f5f5f5" />
    <path d="M55 6v24c0 2 1 3 3 3h24z" fill="#dcdcdd" />
    <path d="M56 6v22c0 2 1 3 3 3h22z" fill="#fbfbfb" />
    <path d="M40 6h13v46c0 4-2.500 6-6.500 6S40 56 40 52z" fill="#44484c" />
    <path d="M46.500 6v50" stroke="#cfd3d5" strokeWidth="5.5" strokeDasharray="1.500 1.300" />
    <path d="M43.500 14h6l1.500 14-2 8h-5l-2-8z" fill="#a9b7c1" stroke="#6d7880" strokeWidth=".8" />
    <circle cx="46.500" cy="33.500" r="2" fill="#44484c" />
    <text x="47" y="92" textAnchor="middle" fontFamily="Inter, sans-serif" fontSize="13" fill="#6b6b6d">
      ZIP
    </text>
  </svg>
);

const Trash = () => (
  <svg width="94" height="94" viewBox="0 0 94 94">
    <defs>
      <linearGradient id="bin" x1="0" x2="1" y1="0" y2="0">
        <stop offset="0" stopColor="#6c7074" />
        <stop offset=".25" stopColor="#57595f" />
        <stop offset=".75" stopColor="#53565b" />
        <stop offset="1" stopColor="#707478" />
      </linearGradient>
    </defs>
    <path d="M6 5l10 82c1.500 8 13 11.500 31 11.500S76.500 95 78 87L88 5z" fill="url(#bin)" />
    <ellipse cx="47" cy="5.500" rx="41" ry="9.500" fill="#4c4e54" stroke="#75787d" strokeWidth="1.2" />
    <path d="M16 84c3 9 15 13 31 13s28-4 31-13c-8 5-52 5-62 0z" fill="#8d9599" opacity=".5" />
  </svg>
);

const dockItems = [
  [Finder, true],
  [Launchpad, false],
  [Pages, false],
  [VsCode, true],
  [Spotify, false],
  [Slack, false],
  [Chrome, true],
  [Xcode, false],
  [Terminal, true],
];

/* ---------- data ---------- */

const menus = [
  ["Chrome", 142.5, 700, -0.5],
  ["File", 84, 500, -0.3],
  ["Edit", 88, 500, -0.2],
  ["View", 100, 500, -0.3],
  ["History", 128, 500, -0.1],
  ["Bookmarks", 176, 500, 0],
  ["Profiles", 131, 500, -0.1],
  ["Tab", 85.5, 500, -0.3],
  ["Window", 137, 500, -0.3],
  ["Help", 80, 500, 0],
];

const tasks = [
  ["Status", "status", 600, 0],
  ["Changes", "code", 500, -0.45],
  ["Build Now", "play", 500, -0.45],
  ["Configure", "gear", 500, -0.4],
  ["Delete Pipeline", "trash", 500, -0.3],
  ["Full Stage View", "search", 500, -0.35],
  ["Rename", "pencil", 500, -0.3],
  ["Pipeline Syntax", "help", 500, -0.4],
];

export default function App() {
  return (
    <Desktop>
      <Global />
      <MenuBar>
        <MenuItem $width={67}>
          <FaApple size={33} />
        </MenuItem>
        {menus.map(([name, width, weight, track]) => (
          <MenuItem key={name} $width={width}>
            <Label $size={25} $weight={weight} $track={track}>{name}</Label>
          </MenuItem>
        ))}
        <StatusIcons>
          {statusItems.map(([gap, icon], i) => (
            <StatusSlot key={i} $gap={gap}>{icon}</StatusSlot>
          ))}
          <MenuItem $width={164}>
            <Label $size={25} $weight={500} $track={0}>Tue 20 Sept</Label>
          </MenuItem>
          <MenuItem $width={69}>
            <Label $size={25} $weight={500} $track={-0.3} $tabular>13:13</Label>
          </MenuItem>
        </StatusIcons>
      </MenuBar>

      <Window>
        <TabStrip>
          <Lights>
            <Light $color="#ed6a5f" />
            <Light $color="#f5bd4f" />
            <Light $color="#61c455" />
          </Lights>
          <Tab $width={474} $left={20} $right={21}>
            <FaGithub size={33} />
            <TabTitle $start={15} $gap={14} $fade>
              <Label $size={24} $weight={500} $track={-0.2}>ing-software-3/07-servidor-bu</Label>
            </TabTitle>
            <Cross />
          </Tab>
          <Tab $active $width={480} $left={25} $right={23}>
            <Butler />
            <TabTitle $start={17}>
              <Label $size={24} $weight={500} $track={-0.25}>simple-maven [Jenkins]</Label>
            </TabTitle>
            <Cross />
          </Tab>
          <Tab $width={476} $left={23} $right={21}>
            <Drive />
            <TabTitle $start={17} $gap={12} $fade>
              <Label $size={24} $weight={500} $track={-0.2}>Sistemas Operativos - Google D</Label>
            </TabTitle>
            <Cross />
          </Tab>
          <TabDivider />
          <StripEnd>
            <Stroke w={26} h={26} sw={3.6} color="#fff">
              <path d="M13 2v22M2 13h22" />
            </Stroke>
          </StripEnd>
          <StripEnd $push>
            <Stroke w={18} h={12} sw={3} color="#fff">
              <path d="M2 2l7 7.500L16 2" />
            </Stroke>
          </StripEnd>
        </TabStrip>

        <Toolbar>
          <NavButton>
            <Stroke w={26} h={26} sw={3.2} color="#fff">
              <path d="M25 13H2.500M13 2L2 13l11 11" />
            </Stroke>
          </NavButton>
          <NavButton $dim>
            <Stroke w={26} h={26} sw={3.2} color="#fff">
              <path d="M1 13h22.500M13 2l11 11-11 11" />
            </Stroke>
          </NavButton>
          <NavButton>
            <svg width="28" height="26" viewBox="0 0 28 26">
              <path d="M23.500 17.500A11.300 11.300 0 1 1 22 5.600" fill="none" stroke="#fff" strokeWidth="3.2" />
              <path d="M27.500 0v11.500H16z" fill="#fff" />
            </svg>
          </NavButton>
          <Address>
            <Stroke w={27} h={27} sw={2.6} color="#b0b2b6">
              <circle cx="13.500" cy="13.500" r="12" />
              <path d="M13.500 12.500v6.500M13.500 8v.5" />
            </Stroke>
            <AddressText>
              <Label $size={27.5} $weight={500} $track={-0.1} $color="#fff">localhost</Label>
              <Label $size={27.5} $track={0.15} $color="#cba6b4">:8080/job/simple-maven/</Label>
            </AddressText>
            <AddressIcons>
              <Stroke w={22} h={29} sw={2.6} color="#bdb9bb">
                <path d="M6.500 10.500H4c-1.500 0-2.500 1-2.500 2.500v12c0 1.500 1 2.500 2.500 2.500h14c1.500 0 2.500-1 2.500-2.500V13c0-1.500-1-2.500-2.500-2.500h-2.500M11 18V2M6.500 6L11 1.500 15.500 6" />
              </Stroke>
              <Stroke w={30} h={28} sw={2.6} color="#bdb9bb" strokeLinejoin="miter">
                <path d="M15 3l3.600 8 8.600.9-6.400 5.800 1.800 8.500L15 21.800l-7.600 4.400 1.800-8.500-6.400-5.800 8.600-.9z" />
              </Stroke>
            </AddressIcons>
          </Address>
          <ToolbarEnd>
            <svg width="28" height="28" viewBox="0 0 28 28">
              <path d="M0 0h28v28H0zM4.500 4v20H18V4z" fill="#fff" fillRule="evenodd" />
            </svg>
            <Avatar>
              <Label $size={23} $color="#fff">F</Label>
            </Avatar>
            <svg width="8" height="28" viewBox="0 0 8 28" fill="#fff">
              <circle cx="4" cy="4" r="3.200" />
              <circle cx="4" cy="14" r="3.200" />
              <circle cx="4" cy="24" r="3.200" />
            </svg>
          </ToolbarEnd>
        </Toolbar>

        <Breadcrumbs>
          <Crumb $width={169}>
            <Label $size={26} $weight={500}>Dashboard</Label>
          </Crumb>
          <Crumb $width={44}><CrumbArrow /></Crumb>
          <Crumb $width={209}>
            <Label $size={26} $weight={500}>simple-maven</Label>
          </Crumb>
          <CrumbArrow />
        </Breadcrumbs>

        <Page>
          <Sidebar>
            <Tasks>
              {tasks.map(([name, icon, weight, track]) => (
                <Task key={name} $active={name === "Status"}>
                  {taskIcons[icon]}
                  <TaskName>
                    <Label $size={28} $weight={weight} $track={track}>{name}</Label>
                  </TaskName>
                </Task>
              ))}
            </Tasks>
            <HistoryHead>
              <HistoryIcon />
              <Raised $by={3} $left={32}>
                <Label $size={27} $weight={700} $track={0.2}>Build History</Label>
              </Raised>
              <Grow />
              <Raised $by={3}>
                <Underlined $size={27} $weight={700} $track={0}>trend</Underlined>
              </Raised>
              <Raised $by={0} $left={22}>
                <Stroke w={22} h={14} sw={2.8}>
                  <path d="M2 2l9 10 9-10" />
                </Stroke>
              </Raised>
            </HistoryHead>
            <Filter>
              <Stroke w={26} h={27} sw={2.2}>
                <circle cx="11" cy="11" r="9.800" />
                <path d="M18 18.500l7 7" />
              </Stroke>
              <Label $size={27.5} $color="#757575" $track={0}>Filter builds...</Label>
            </Filter>
            <BuildRow>
              <svg width="30" height="30" viewBox="0 0 30 30">
                <circle cx="15" cy="14" r="13.200" fill="none" stroke="#f59a35" strokeWidth="3.4" />
                <path d="M15 6.500v8.500" stroke="#f59a35" strokeWidth="3.8" />
                <circle cx="15" cy="20.500" r="2.200" fill="#f59a35" />
              </svg>
              <Raised $by={5} $left={9}>
                <Underlined $size={24} $weight={600}>#1</Underlined>
              </Raised>
              <Raised $by={5} $left={129}>
                <Underlined $size={24} $weight={500} $color="#717177">20 Sept 2022, 13:09</Underlined>
              </Raised>
            </BuildRow>
            <Feeds>
              <Raised $by={12}><FeedIcon /></Raised>
              <FeedLink>
                <Underlined $size={23.5} $weight={600} $track={-0.05}>Atom feed for all</Underlined>
              </FeedLink>
              <Raised $by={12} $left={19}><FeedIcon /></Raised>
              <FeedLink>
                <Underlined $size={23.5} $weight={600} $track={-0.05}>Atom feed for failures</Underlined>
              </FeedLink>
            </Feeds>
          </Sidebar>

          <Content>
            <Heading $size={49} $line={61} $track={-0.65}>Pipeline simple-maven</Heading>
            <Actions>
              <AddLink>
                <Stroke w={28} h={28} sw={1.9} color={link}>
                  <path d="M19.500 3.300c1.700-1.700 4.200-1.900 5.900-.3s1.600 4.100-.1 5.800L9.500 23.200c-.8.8-1.700 1.300-2.700 1.700L1.200 26.800l2-5.600c.4-1 .9-1.900 1.700-2.700zM18 5l5.400 5.600" />
                </Stroke>
                <Label $size={24} $weight={600} $track={-0.4}>Add description</Label>
              </AddLink>
              <Button>
                <Label $size={24} $weight={700} $track={0.35}>Disable Project</Label>
              </Button>
            </Actions>
            <Recent>
              <Stroke w={90} h={66} sw={6}>
                <path d="M29 11.500L3.500 33 29 54.500M61.500 11.500L87 33 61.500 54.500M54 3L35.500 63" />
              </Stroke>
              <RecentText>
                <Label $size={27} $weight={600} $track={-0.12}>Recent Changes</Label>
              </RecentText>
            </Recent>
            <Heading as="h2" $top={65} $size={42} $line={50} $track={-0.1}>Stage View</Heading>

            <StageTable>
              <RunColumn>
                <AverageLabel>
                  <Label $size={27} $track={-0.35}>Average stage times:</Label>
                </AverageLabel>
                <Run>
                  <RunBadge>
                    <Label $size={20} $weight={600}>#1</Label>
                  </RunBadge>
                  <RunDate>
                    <Label $size={21} $line="31px">Sep 20</Label>
                    <Label $size={21} $line="31px">13:09</Label>
                  </RunDate>
                  <RunChanges>
                    <Label $size={21} $line="31px" $color="#9f9f94">
                      No
                      <br />
                      Changes
                    </Label>
                  </RunChanges>
                  <RunDownload>
                    <Stroke w={22} h={22} sw={3.4} color="#274b85">
                      <circle cx="11" cy="11" r="9.300" />
                      <path d="M11 6v5" strokeLinecap="butt" />
                      <path d="M8.500 11h5L11 14.500z" strokeWidth="2" fill="#274b85" />
                    </Stroke>
                  </RunDownload>
                </Run>
              </RunColumn>
              <Stages>
                <Stage>
                  <StageName $bg="#f7f7f7">
                    <Label $size={27} $weight={700} $line="42px" $track={0}>
                      Declarative:
                      <br />
                      Tool Install
                    </Label>
                  </StageName>
                  <StageAverage $bg="#e9e9e9" $edge="#dcdcdc">
                    <Label $size={27} $line="24px">16s</Label>
                    <Meter $bg="#dadada">
                      <MeterFill $width={110} />
                    </Meter>
                  </StageAverage>
                  <StageResult $bg="#e9f8e5">
                    <StageBox>
                      <Label $size={34} $line="42px" $color="#4c504b" $track={-0.8}>16s</Label>
                    </StageBox>
                  </StageResult>
                </Stage>
                <Stage>
                  <StageName $bg="#ffffff">
                    <Label $size={27} $weight={700} $line="42px" $track={0}>Build</Label>
                  </StageName>
                  <StageAverage $bg="#f2f2f2" $edge="#e5e5e5">
                    <Label $size={27} $line="24px">18s</Label>
                    <Meter $bg="#e3e3e3" $end>
                      <MeterFill $width={118} />
                    </Meter>
                  </StageAverage>
                  <StageResult $bg="#faf9db">
                    <StageBox>
                      <Label $size={34} $line="42px" $color="#504f47" $track={-0.8}>18s</Label>
                    </StageBox>
                  </StageResult>
                </Stage>
              </Stages>
            </StageTable>
            <Heading as="h2" $top={44} $size={42} $line={50} $track={-0.2}>Permalinks</Heading>
          </Content>
        </Page>

        <Footer>
          <Label $size={27.5} $weight={500} $track={-0.2}>REST API</Label>
          <Label $size={27.5} $weight={500} $track={0.05}>Jenkins 2.361.1</Label>
        </Footer>
      </Window>

      <Shelf>
        <BackWindow>
          <BackStatus>
            <Label $size={22.5} $track={0.35}>15,91 GB available</Label>
          </BackStatus>
        </BackWindow>
        <Notice>
          <Label $size={16} $weight={700} $color="#e4e4e4">Omega</Label>
          <Label $size={16} $weight={700} $color="#e9ae41">grasste</Label>
        </Notice>
        <Dock>
          {dockItems.map(([Icon, running], i) => (
            <DockItem key={i}>
              <Icon />
              {running && <RunningDot />}
            </DockItem>
          ))}
          <DockDivider />
          <DockItem><Archive /></DockItem>
          <DockItem $last><Trash /></DockItem>
        </Dock>
      </Shelf>
    </Desktop>
  );
}
